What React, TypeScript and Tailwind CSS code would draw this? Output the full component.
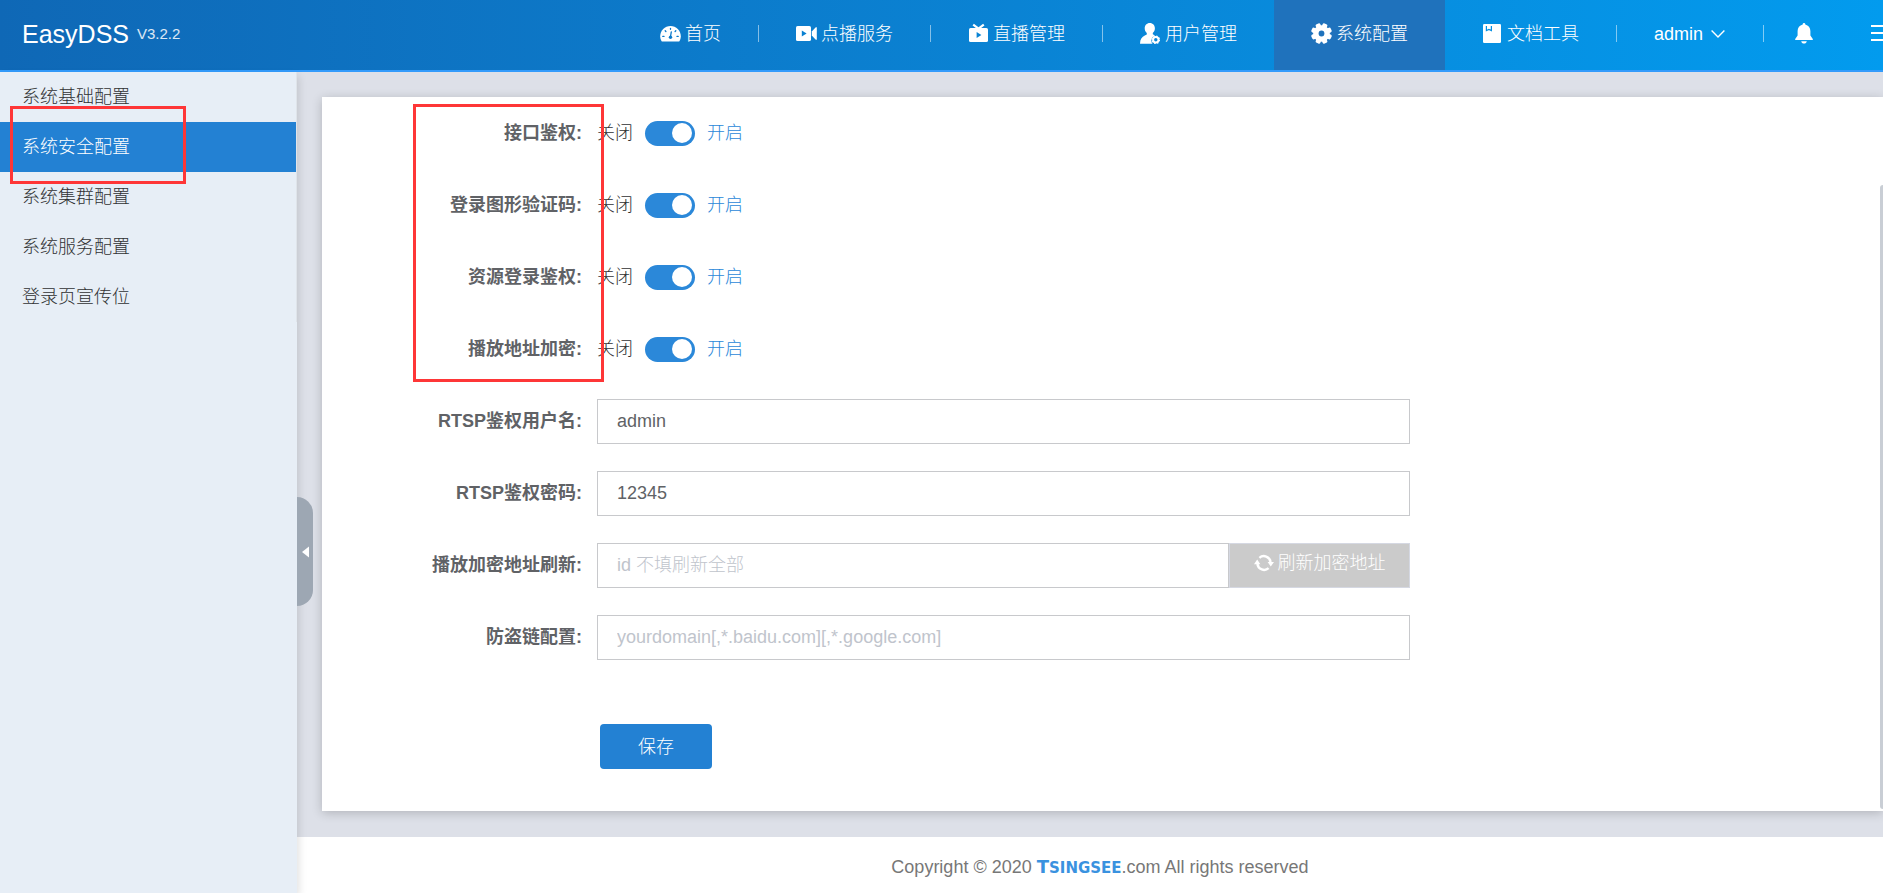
import { useState, type ReactNode } from "react";

interface NavItem {
  label: string;
  icon: ReactNode;
  active?: boolean;
  divider?: boolean;
}

const TEETH = [0, 45, 90, 135, 180, 225, 270, 315];

function GaugeIcon() {
  return (
    <svg viewBox="0 0 21 21" className="w-[21px] h-[21px]" fill="none">
      <path d="M1.8 18.5C.7 16.8 .2 15 .2 13.2C.2 7.6 4.8 3 10.5 3S20.8 7.6 20.8 13.2C20.8 15 20.3 16.8 19.2 18.5Z" fill="#fff" />
      <g stroke="#0b7acc" strokeWidth="1.3" strokeLinecap="round">
        <path d="M10.5 5.3V6.3M5.2 7.8L5.9 8.5M15.8 7.8L15.1 8.5M2.8 13.4H4M17 13.4H18.2" />
        <path d="M11.3 8.8L10.6 13" />
      </g>
      <circle cx="10.5" cy="14.2" r="1.7" fill="#0b7acc" />
    </svg>
  );
}

function VideoIcon() {
  return (
    <svg viewBox="0 0 21 21" className="w-[21px] h-[21px]">
      <rect x="0" y="3" width="15" height="15" rx="1.6" fill="#fff" />
      <path d="M15.8 8.6L19.8 4.2H20.8V16.8H19.8L15.8 12.4Z" fill="#fff" />
      <path d="M5.8 7.6L10.6 10.5L5.8 13.4Z" fill="#0980d1" />
    </svg>
  );
}

function TvIcon() {
  return (
    <svg viewBox="0 0 21 21" className="w-[21px] h-[21px]">
      <rect x="1" y="5" width="19" height="14" rx="1.6" fill="#fff" />
      <path d="M5.2 1.6L10.5 5.6L15.8 1.6" fill="none" stroke="#fff" strokeWidth="2.2" />
      <path d="M8.6 9L13.4 12L8.6 15Z" fill="#0983d4" />
    </svg>
  );
}

function UserIcon() {
  return (
    <svg viewBox="0 0 21 21" className="w-[21px] h-[21px]">
      <path
        d="M9.8 0C6.7 0 4.7 2.3 4.7 5.3C4.7 7.3 5.5 9 6.8 10.1V11.4C4.2 12.6 1 14.4 .4 17.4L0 20.8H12.5C10.8 18.9 10.9 15.4 13.2 13.4C14 12.7 14.5 12.6 15 12.4L12.8 11.2V10.1C14.1 9 14.9 7.3 14.9 5.3C14.9 2.3 12.9 0 9.8 0Z"
        fill="#fff"
      />
      <circle cx="15.8" cy="16.8" r="2.7" fill="none" stroke="#fff" strokeWidth="2" />
      <circle cx="15.8" cy="16.8" r="3.7" fill="none" stroke="#fff" strokeWidth="1.2" strokeDasharray="1.45 1.45" />
    </svg>
  );
}

function GearIcon() {
  return (
    <svg viewBox="0 0 21 21" className="w-[21px] h-[21px]">
      <circle cx="10.5" cy="10.5" r="8.3" fill="#fff" />
      {TEETH.map((deg) => (
        <rect
          key={deg}
          x="8"
          y="0"
          width="5"
          height="6"
          rx="1.6"
          fill="#fff"
          transform={`rotate(${deg + 22.5} 10.5 10.5)`}
        />
      ))}
      <circle cx="10.5" cy="10.5" r="2.9" fill="#1f72bc" />
    </svg>
  );
}

function BookIcon() {
  return (
    <svg viewBox="0 0 21 21" className="w-[21px] h-[21px]">
      <rect x="1" y="1" width="18" height="19" rx="1.2" fill="#fff" />
      <path d="M4.4 3V7.6L6.9 6.4L9.4 7.6V3" fill="none" stroke="#0690e2" strokeWidth="1.2" />
    </svg>
  );
}

function RefreshIcon() {
  return (
    <svg viewBox="0 0 20 20" className="w-[20px] h-[20px]" fill="none" stroke="#fff" strokeWidth="2.4">
      <path d="M3.4 11A6.8 6.8 0 0 0 14.6 15.2M16.6 9A6.8 6.8 0 0 0 5.4 4.8" />
      <path d="M0 11.2L3.2 6.6L6.4 11.2ZM13.6 9L16.8 13.6L20 9Z" fill="#fff" stroke="none" />
    </svg>
  );
}

const NAV: NavItem[] = [
  { label: "首页", icon: <GaugeIcon />, divider: true },
  { label: "点播服务", icon: <VideoIcon />, divider: true },
  { label: "直播管理", icon: <TvIcon />, divider: true },
  { label: "用户管理", icon: <UserIcon /> },
  { label: "系统配置", icon: <GearIcon />, active: true },
  { label: "文档工具", icon: <BookIcon />, divider: true },
];

const MENU = ["系统基础配置", "系统安全配置", "系统集群配置", "系统服务配置", "登录页宣传位"];

const SWITCHES = ["接口鉴权", "登录图形验证码", "资源登录鉴权", "播放地址加密"];

const INPUT =
  "h-[45px] w-full border border-[#c8c9cc] bg-white px-[19px] text-[#606266] placeholder:text-[#c0c4cc] outline-none";

function Divider() {
  return <span className="mb-[3px] h-[17px] w-px shrink-0 bg-white/50" />;
}

function Header() {
  return (
    <header className="flex h-[72px] items-stretch overflow-hidden border-b-2 border-[#339bfb] bg-linear-to-r from-[#0f68b6] to-[#029bee] text-white">
      <a href="#" className="flex items-center gap-2 pb-[3px] pl-[22px]">
        <span className="text-[25px]">EasyDSS</span>
        <span className="text-[15px] text-white/85">V3.2.2</span>
      </a>
      <nav className="ml-auto flex">
        {NAV.map((item) => (
          <div key={item.label} className="flex items-center">
            <a
              href="#"
              className={`flex h-full items-center gap-1 px-[37px] pb-[3px] ${item.active ? "bg-[#1f72bc]" : ""}`}
            >
              {item.icon}
              {item.label}
            </a>
            {item.divider && <Divider />}
          </div>
        ))}
      </nav>
      <button className="flex items-center gap-2 pb-[3px] pl-[37px] pr-[38px]">
        admin
        <svg viewBox="0 0 14 8" className="w-[14px] h-[8px]" fill="none" stroke="#fff" strokeWidth="1.4">
          <path d="M.6 .6L7 7L13.4 .6" />
        </svg>
      </button>
      <div className="flex items-center">
        <Divider />
      </div>
      <button aria-label="消息" className="flex items-center pb-[3px] pl-[31px] pr-[58px]">
        <svg viewBox="0 0 18 21" className="w-[18px] h-[21px]" fill="#fff">
          <path d="M9 0C8.2 0 7.7 .6 7.7 1.4C4.6 2.2 2.6 4.6 2.6 8V12.4L.2 16V17H17.8V16L15.4 12.4V8C15.4 4.6 13.4 2.2 10.3 1.4C10.3 .6 9.8 0 9 0Z" />
          <path d="M6.2 18.2H11.8C11.5 19.8 10.4 20.6 9 20.6C7.6 20.6 6.5 19.8 6.2 18.2Z" />
        </svg>
      </button>
      <button aria-label="菜单" className="-mr-2 flex shrink-0 items-center pb-[5px]">
        <svg viewBox="0 0 20 16" className="w-[20px] h-[16px]" stroke="#fff" strokeWidth="2">
          <path d="M0 1H20M0 8H20M0 15H20" />
        </svg>
      </button>
    </header>
  );
}

function Sidebar() {
  return (
    <aside className="relative z-10 w-[297px] shrink-0 bg-[#e7eef6] shadow-[2px_4px_8px_rgba(0,0,0,0.12)]">
      <nav className="border-r border-[#dfe4ea]">
        {MENU.map((label, i) => (
          <a
            key={label}
            href="#"
            className={`relative flex h-[50px] items-center pl-[22px] ${i === 1 ? "bg-[#2381d3] text-white" : "text-[#303133]"}`}
          >
            {label}
            {i === 1 && (
              <span className="absolute -top-4 left-[10px] z-10 h-[78px] w-[176px] border-3 border-[#fe3637]" />
            )}
          </a>
        ))}
      </nav>
      <button
        aria-label="收起"
        className="absolute left-full top-[425px] flex h-[109px] w-4 items-center justify-center rounded-r-2xl bg-[#9da7b3]"
      >
        <svg viewBox="0 0 7 12" className="w-[7px] h-[12px]" fill="#fff">
          <path d="M7 .4V11.6L0 6Z" />
        </svg>
      </button>
    </aside>
  );
}

function Row({ label, id, children }: { label: string; id: string; children: ReactNode }) {
  return (
    <div className="flex h-[72px] items-center">
      <label htmlFor={id} className="w-[275px] shrink-0 pr-[15px] text-right font-bold text-[#606266]">
        {label}:
      </label>
      <div className="flex max-w-[813px] flex-1 items-center">{children}</div>
    </div>
  );
}

function SwitchField({ id }: { id: string }) {
  const [on, setOn] = useState(true);
  return (
    <div className="flex items-center gap-3">
      <span className={on ? "text-[#303133]" : "text-[#2b88d9]"}>关闭</span>
      <input
        id={id}
        type="checkbox"
        role="switch"
        checked={on}
        onChange={(e) => setOn(e.target.checked)}
        className="flex h-[25px] w-[50px] appearance-none items-center rounded-full bg-[#c0c4cc] px-[3px] before:size-5 before:rounded-full before:bg-white checked:justify-end checked:bg-[#2b88d9]"
      />
      <span className={on ? "text-[#2b88d9]" : "text-[#303133]"}>开启</span>
    </div>
  );
}

export default function App() {
  return (
    <div className="flex min-h-screen flex-col overflow-hidden bg-[#dde0e8] font-['Liberation_Sans','Noto_Sans_CJK_SC',sans-serif] text-[18px] font-light leading-6">
      <Header />
      <div className="flex flex-1">
        <Sidebar />
        <main className="flex min-w-0 flex-1 flex-col">
          <div className="relative mb-[26px] ml-[25px] mt-[25px] flex-1 bg-white shadow-[0_2px_10px_rgba(0,0,0,0.2)]">
            <form onSubmit={(e) => e.preventDefault()}>
              {SWITCHES.map((label, i) => (
                <Row key={label} label={label} id={`switch-${i}`}>
                  <SwitchField id={`switch-${i}`} />
                </Row>
              ))}
              <Row label="RTSP鉴权用户名" id="rtsp-user">
                <input id="rtsp-user" defaultValue="admin" className={INPUT} />
              </Row>
              <Row label="RTSP鉴权密码" id="rtsp-pass">
                <input id="rtsp-pass" defaultValue="12345" className={INPUT} />
              </Row>
              <Row label="播放加密地址刷新" id="refresh-id">
                <input id="refresh-id" placeholder="id 不填刷新全部" className={INPUT} />
                <button
                  type="button"
                  className="flex h-[45px] w-[181px] shrink-0 items-center justify-center gap-1 border border-[#d5d8e2] bg-[#cbcbcb] pb-1 text-white"
                >
                  <RefreshIcon />
                  刷新加密地址
                </button>
              </Row>
              <Row label="防盗链配置" id="domains">
                <input id="domains" placeholder="yourdomain[,*.baidu.com][,*.google.com]" className={INPUT} />
              </Row>
              <button className="ml-[278px] mt-[51px] h-[45px] w-[112px] rounded bg-[#2381d3] text-white">保存</button>
            </form>
            <span className="absolute left-[91px] top-[7px] h-[278px] w-[191px] border-3 border-[#fe3637]" />
            <span className="absolute bottom-[2px] right-0 top-[88px] w-[3px] rounded-l bg-[#c9ced5]" />
          </div>
          <footer className="flex h-[56px] items-center justify-center bg-white pl-5 pt-1 text-[#777]">
            <p>
              Copyright © 2020{" "}
              <a href="#" className="font-['DejaVu_Sans',sans-serif] text-[15px] font-bold text-[#3a92df]">
                <span className="text-[18px]">T</span>SINGSEE
              </a>
              .com All rights reserved
            </p>
          </footer>
        </main>
      </div>
    </div>
  );
}
